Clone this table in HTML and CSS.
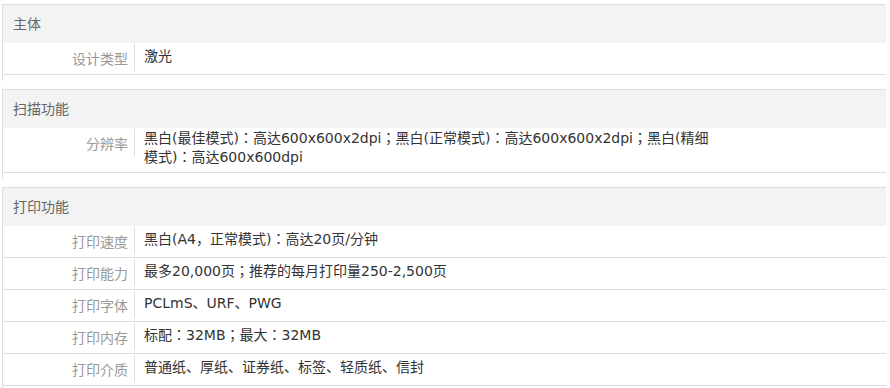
FILE: index.html
```html
<!DOCTYPE html>
<html lang="zh-CN">
<head>
<meta charset="utf-8">
<link rel="stylesheet" href="styles.css">
</head>
<body>
<div class="spec">
  <section class="group">
    <div class="group-title">主体</div>
    <div class="row"><div class="label">设计类型</div><div class="value">激光</div></div>
  </section>
  <section class="group">
    <div class="group-title">扫描功能</div>
    <div class="row"><div class="label">分辨率</div><div class="value">黑白(最佳模式)：高达600x600x2dpi；黑白(正常模式)：高达600x600x2dpi；黑白(精细模式)：高达600x600dpi</div></div>
  </section>
  <section class="group">
    <div class="group-title">打印功能</div>
    <div class="row"><div class="label">打印速度</div><div class="value">黑白(A4，正常模式)：高达20页/分钟</div></div>
    <div class="row"><div class="label">打印能力</div><div class="value">最多20,000页；推荐的每月打印量250-2,500页</div></div>
    <div class="row"><div class="label">打印字体</div><div class="value">PCLmS、URF、PWG</div></div>
    <div class="row"><div class="label">打印内存</div><div class="value">标配：32MB；最大：32MB</div></div>
    <div class="row"><div class="label">打印介质</div><div class="value">普通纸、厚纸、证券纸、标签、轻质纸、信封</div></div>
  </section>
</div>
</body>
</html>
```

FILE: styles.css
```css
html, body {
  margin: 0;
  padding: 0;
  background: #fff;
}
body {
  font-family: "DejaVu Sans", "Noto Sans CJK JP", sans-serif;
  font-size: 14px;
  color: #333;
  font-feature-settings: "locl" 0;
}
.spec {
  padding: 4px 4px 0 2px;
}
.group {
  border-top: 1px solid #ddd;
  border-left: 1px solid #ddd;
  padding-bottom: 6px;
  margin-bottom: 8px;
}
.group-title {
  background: #f3f3f3;
  height: 38px;
  line-height: 38px;
  padding-left: 10px;
  color: #666;
}
.row {
  display: flex;
  align-items: flex-start;
  border-bottom: 1px solid #ddd;
  min-height: 31px;
}
.label {
  width: 125px;
  height: 27px;
  flex: none;
  margin-top: 1px;
  padding-right: 6px;
  border-right: 1px solid #ddd;
  color: #999;
  display: flex;
  align-items: center;
  justify-content: flex-end;
}
.value {
  width: 572px;
  align-self: center;
  padding: 1px 0 5px 9px;
  line-height: 19px;
  color: #333;
}
```
